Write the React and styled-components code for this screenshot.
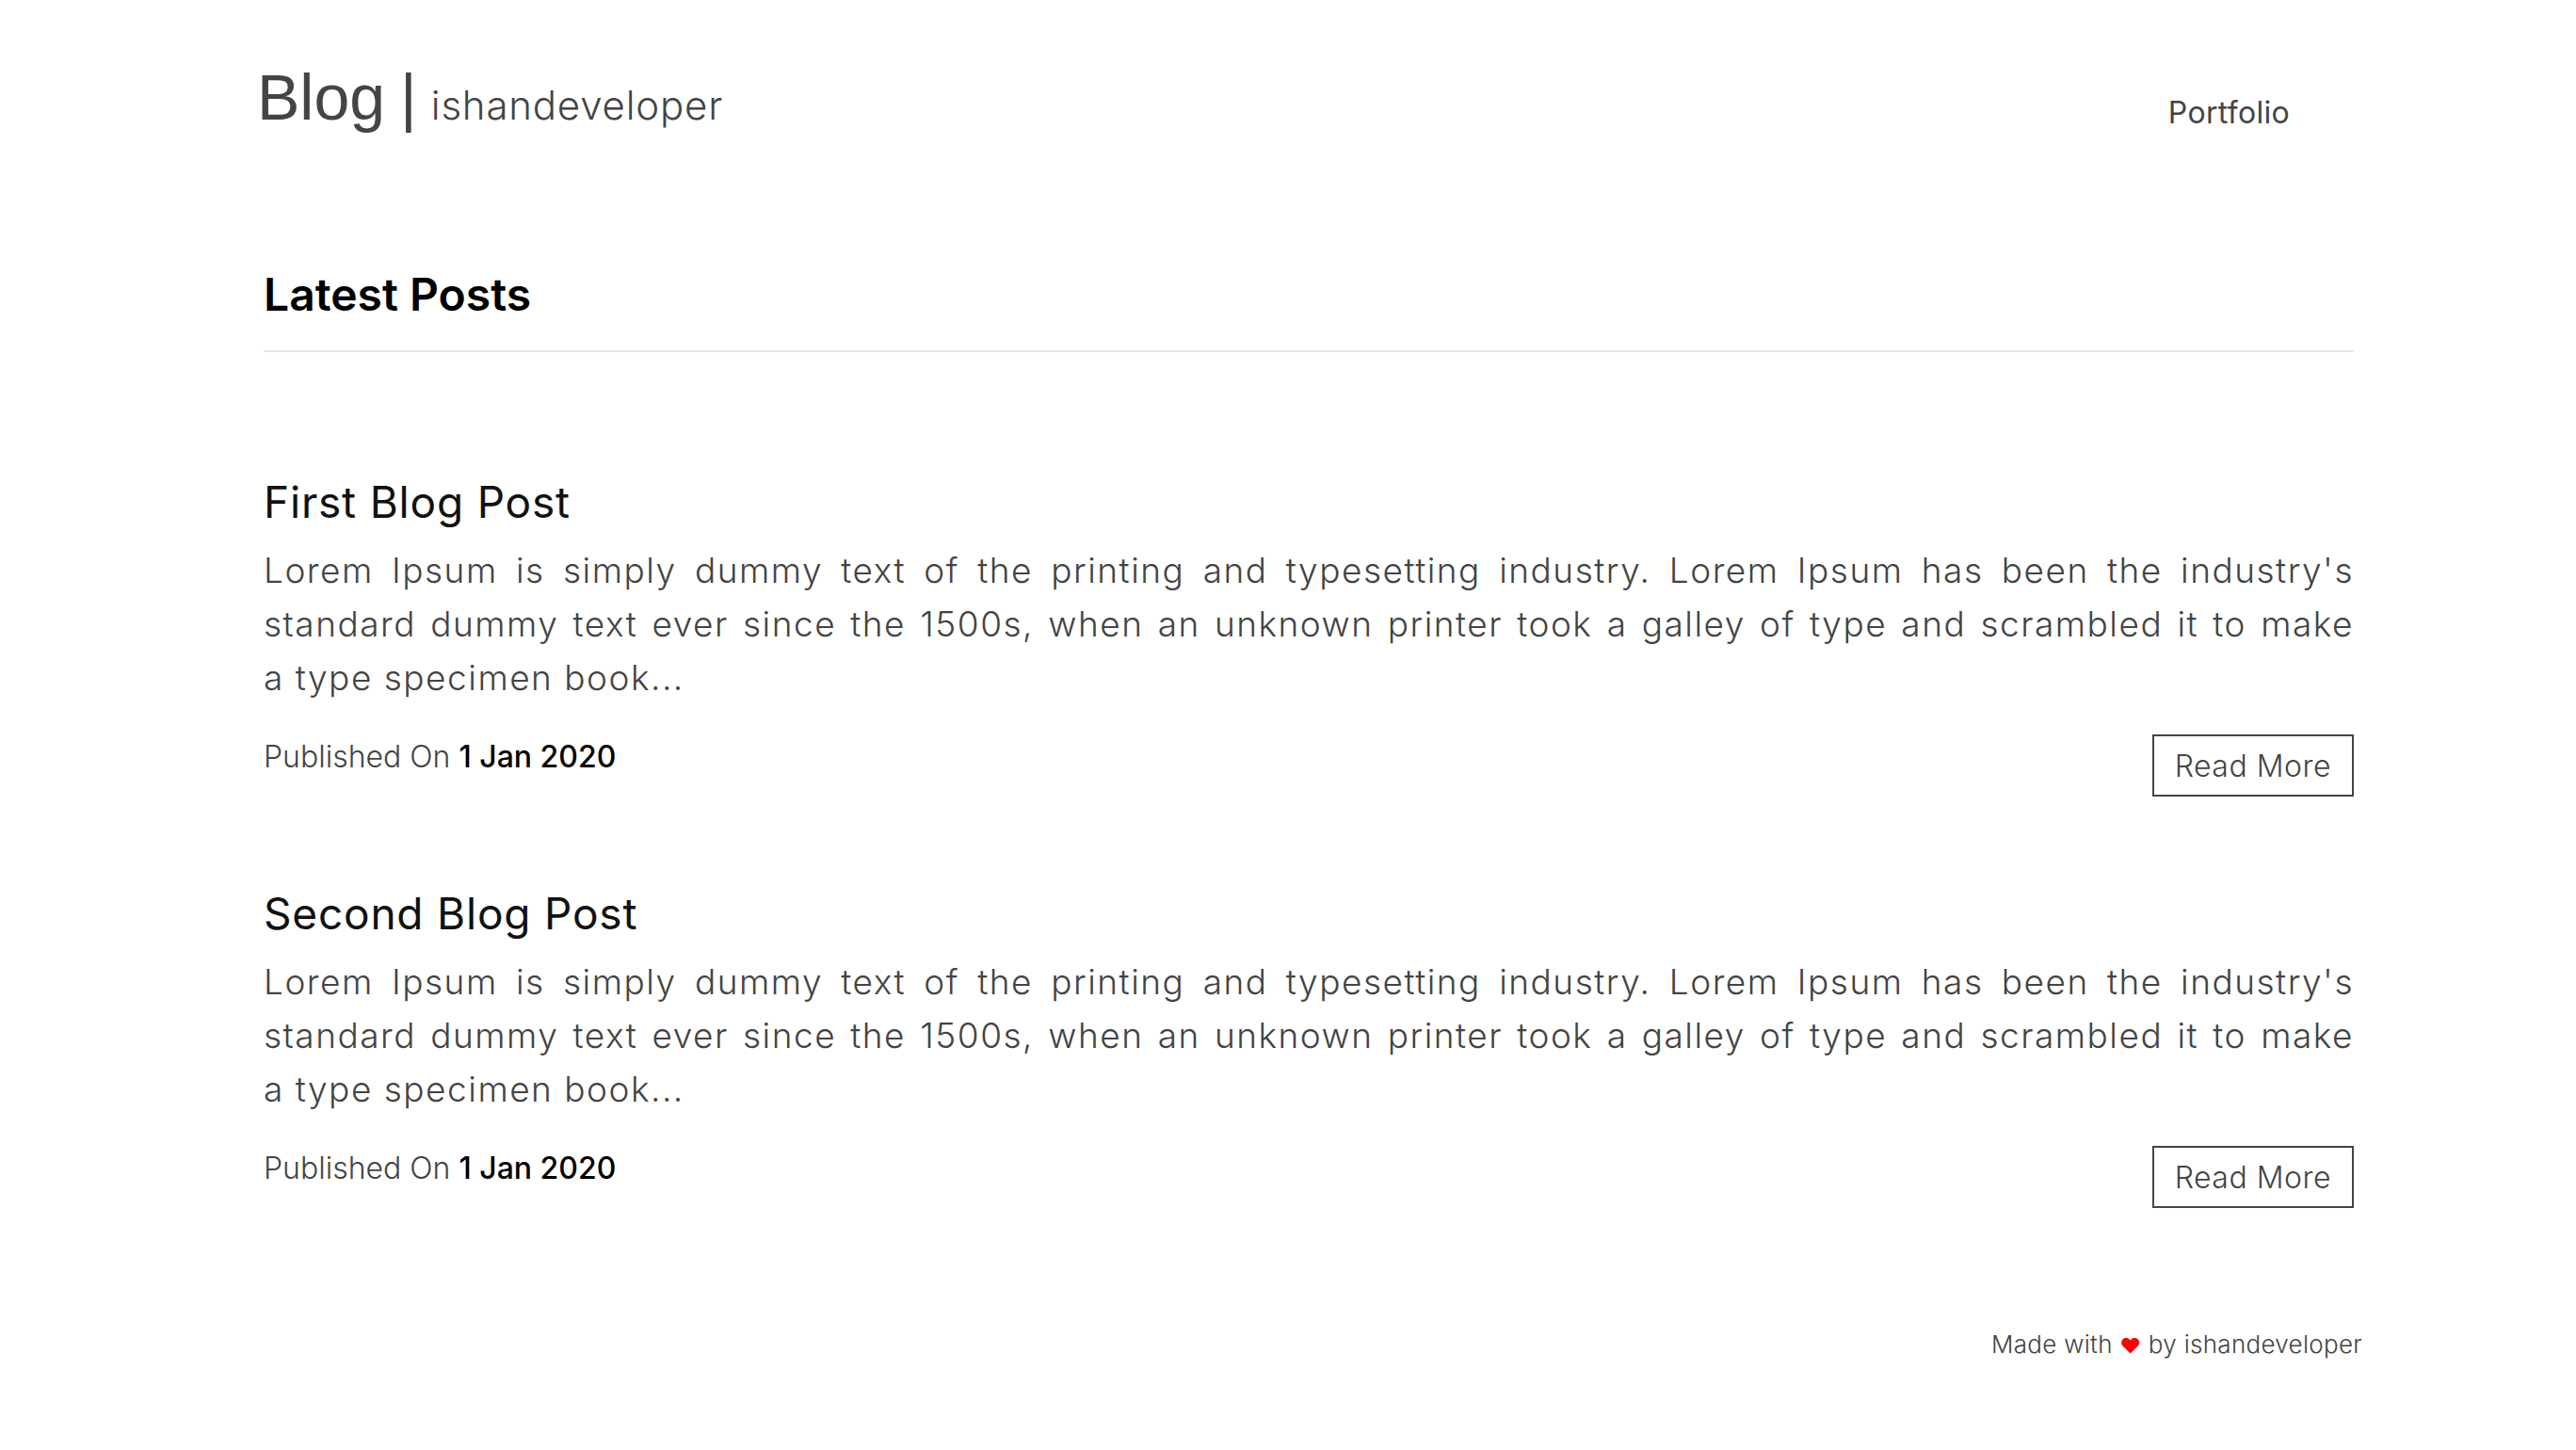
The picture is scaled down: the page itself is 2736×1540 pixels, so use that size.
import React from "react";
import styled, { createGlobalStyle } from "styled-components";

const GlobalStyle = createGlobalStyle`
  body {
    margin: 0;
    background: #fff;
    font-family: Inter, "Open Sans", sans-serif;
    color: #444;
  }
`;

const posts = [
  { id: 1, title: "First Blog Post", date: "1 Jan 2020" },
  { id: 2, title: "Second Blog Post", date: "1 Jan 2020" },
];

// excerpt split the way the reference wraps it
const excerptLines = [
  "Lorem Ipsum is simply dummy text of the printing and typesetting industry. Lorem Ipsum has been the industry's",
  "standard dummy text ever since the 1500s, when an unknown printer took a galley of type and scrambled it to make",
  "a type specimen book...",
];

const App = () => {
  return (
    <>
      <GlobalStyle />
      <Page>
        <Header>
          <Brand>
            Blog<Divider>|</Divider>
            <BrandSub>ishandeveloper</BrandSub>
          </Brand>
          <NavLink href="#">Portfolio</NavLink>
        </Header>

        <SectionTitle>Latest Posts</SectionTitle>

        <PostList>
          {posts.map((post) => (
            <Post key={post.id}>
              <PostTitle>{post.title}</PostTitle>
              <Excerpt>
                {excerptLines.map((line, i) => (
                  <ExcerptLine key={i} $last={i === excerptLines.length - 1}>
                    {line}
                  </ExcerptLine>
                ))}
              </Excerpt>
              <Meta>
                <Published>
                  Published On <strong>{post.date}</strong>
                </Published>
                <ReadMore>Read More</ReadMore>
              </Meta>
            </Post>
          ))}
        </PostList>

        <Footer>
          Made with <Heart>♥</Heart> by ishandeveloper
        </Footer>
      </Page>
    </>
  );
};

export default App;

const Page = styled.div`
  width: 2220px;
  margin-left: 280px;
  padding-bottom: 60px;
`;

const Header = styled.header`
  display: flex;
  justify-content: space-between;
  align-items: flex-start;
  padding-top: 63px;
  margin-left: -7px;
`;

const Brand = styled.div`
  font-family: "Liberation Sans", Arial, sans-serif;
  font-size: 68px;
  line-height: 80px;
  color: #444;
`;

const Divider = styled.span`
  margin: 0 15px 0 16px;
`;

const BrandSub = styled.span`
  font-family: Inter, sans-serif;
  font-size: 42px;
  font-weight: 300;
  letter-spacing: 0.8px;
`;

const NavLink = styled.a`
  margin-top: 37px;
  font-size: 32px;
  line-height: 40px;
  letter-spacing: 0.3px;
  color: #444;
  text-decoration: none;
  padding-right: 68px;
`;

const SectionTitle = styled.h2`
  margin: 131px 0 0;
  padding-bottom: 29px;
  font-size: 48px;
  line-height: 60px;
  font-weight: 600;
  color: #000;
  border-bottom: 2px solid #e6e6e6;
`;

const PostList = styled.section`
  display: flex;
  flex-direction: column;
  gap: 96px;
  margin-top: 131px;
`;

const Post = styled.article`
  display: flex;
  flex-direction: column;
`;

const PostTitle = styled.h3`
  margin: 0;
  font-size: 46px;
  line-height: 56px;
  font-weight: 400;
  letter-spacing: 0.8px;
  color: #111;
`;

const Excerpt = styled.p`
  margin: 16px 0 0;
  font-size: 37px;
  line-height: 57px;
  font-weight: 300;
  letter-spacing: 1.5px;
  color: #444;
`;

const ExcerptLine = styled.span`
  display: block;
  white-space: nowrap;
  text-align: justify;
  text-align-last: ${(p) => (p.$last ? "left" : "justify")};
`;

const Meta = styled.div`
  display: flex;
  justify-content: space-between;
  align-items: flex-start;
  margin-top: 32px;
`;

const Published = styled.div`
  font-size: 32px;
  line-height: 48px;
  font-weight: 300;
  color: #444;

  strong {
    font-weight: 500;
    color: #000;
  }
`;

const ReadMore = styled.button`
  height: 66px;
  padding: 0 22px;
  border: 2px solid #444;
  background: #fff;
  font-family: Inter, sans-serif;
  font-size: 32px;
  font-weight: 300;
  letter-spacing: 0.5px;
  color: #444;
  cursor: pointer;
`;

const Footer = styled.footer`
  margin: 127px -9px 0 0;
  text-align: right;
  font-size: 26px;
  line-height: 36px;
  font-weight: 300;
  letter-spacing: 0.3px;
  color: #444;
`;

const Heart = styled.span`
  color: #f00;
  font-size: 22px;
`;
